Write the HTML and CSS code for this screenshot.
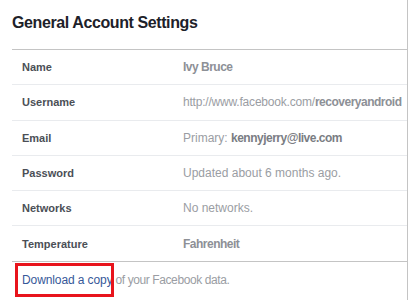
FILE: index.html
```html
<!DOCTYPE html>
<html lang="en">
<head>
    <meta charset="UTF-8">
    <meta name="viewport" content="width=device-width, initial-scale=1.0">
    <title>General Account Settings</title>
    <link rel="stylesheet" href="styles.css">
</head>
<body>
    <div class="page">
        <h2 class="title">General Account Settings</h2>
        <ul class="settings">
            <li class="row">
                <span class="label">Name</span>
                <span class="value"><strong>Ivy Bruce</strong></span>
            </li>
            <li class="row">
                <span class="label">Username</span>
                <span class="value"><span class="url">http://www.facebook.com/</span><strong>recoveryandroid</strong></span>
            </li>
            <li class="row">
                <span class="label">Email</span>
                <span class="value">Primary: <strong class="dark">kennyjerry@live.com</strong></span>
            </li>
            <li class="row">
                <span class="label">Password</span>
                <span class="value">Updated about 6 months ago.</span>
            </li>
            <li class="row">
                <span class="label">Networks</span>
                <span class="value">No networks.</span>
            </li>
            <li class="row">
                <span class="label">Temperature</span>
                <span class="value"><strong>Fahrenheit</strong></span>
            </li>
        </ul>
        <p class="footer">
            <a href="#" class="link">Download a copy</a><span class="rest"> of your Facebook data.</span>
            <span class="highlight"></span>
        </p>
    </div>
</body>
</html>
```

FILE: styles.css
```css
*{
    margin: 0;
    padding: 0;
    box-sizing: border-box;
}
body{
    background-color: #fff;
    font-family: "Liberation Sans", Arial, sans-serif;
}
.page{
    margin-left: 12px;
    width: 396px;
    height: 300px;
    border-right: 1px solid #c4c4c4;
}
.title{
    font-size: 16px;
    line-height: 20px;
    font-weight: bold;
    letter-spacing: -0.4px;
    color: #1d2129;
    padding-top: 13px;
    height: 49px;
}
.settings{
    list-style: none;
    border-top: 1px solid #c4c4c4;
}
.row{
    display: flex;
    align-items: center;
    height: 35.3px;
    border-bottom: 1px solid #e9ebee;
    padding-left: 10px;
}
.row:last-child{
    border-bottom-color: #c4c4c4;
}
.label{
    flex-shrink: 0;
    width: 161px;
    font-size: 11px;
    font-weight: bold;
    color: #4b4f56;
}
.value{
    font-size: 12px;
    color: #9a9da3;
    white-space: nowrap;
}
.value .url{
    letter-spacing: -0.2px;
}
.value strong{
    color: #8d9096;
    letter-spacing: -0.5px;
}
.value strong.dark{
    color: #7a7d83;
}
.footer{
    position: relative;
    padding: 11px 0 0 10px;
    font-size: 12px;
    color: #9a9da3;
}
.link{
    color: #365899;
    text-decoration: none;
    letter-spacing: -0.1px;
}
.rest{
    letter-spacing: -0.4px;
}
.highlight{
    position: absolute;
    left: 3px;
    top: 1px;
    width: 99px;
    height: 34px;
    border: 3px solid #e8141c;
}
```
